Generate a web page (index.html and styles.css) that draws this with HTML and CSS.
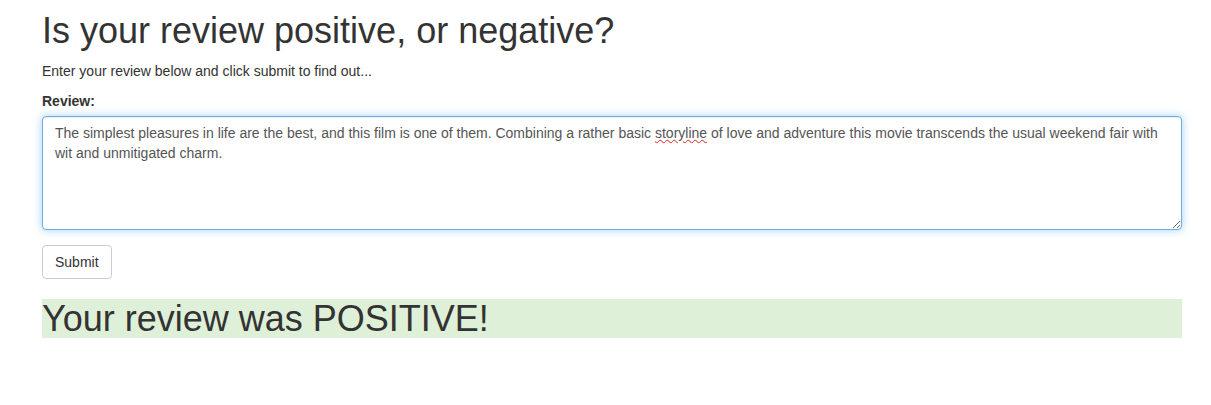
FILE: index.html
```html
<!DOCTYPE html>
<html lang="en">
<head>
<meta charset="utf-8">
<title>Review sentiment</title>
<link rel="stylesheet" href="styles.css">
</head>
<body>
<div class="container">
  <h1 class="title">Is your review positive, or negative?</h1>
  <p class="intro">Enter your review below and click submit to find out...</p>
  <form class="review-form">
    <div class="form-group">
      <label class="form-label">Review:</label>
      <div class="form-control review-box" role="textbox" aria-multiline="true">The simplest pleasures in life are the best, and this film is one of them. Combining a rather basic <span class="misspelled">storyline</span> of love and adventure this movie transcends the usual weekend fair with wit and unmitigated charm.</div>
    </div>
    <button type="button" class="btn">Submit</button>
  </form>
  <h1 class="result">Your review was POSITIVE!</h1>
</div>
</body>
</html>
```
FILE: styles.css
```css
* { box-sizing: border-box; }
html, body { margin: 0; padding: 0; }
body {
  font-family: "Liberation Sans", Arial, Helvetica, sans-serif;
  font-size: 14px;
  line-height: 1.42857143;
  color: #333;
  background: #fff;
}
.container {
  width: 1140px;
  margin-left: 42px;
}
.title {
  font-size: 36px;
  font-weight: 500;
  line-height: 1.1;
  margin: 11px 0 10px;
}
.intro { margin: 0 0 10px; }
.form-group { margin-bottom: 15px; }
.form-label {
  display: inline-block;
  font-weight: bold;
  margin-bottom: 5px;
}
.form-control {
  display: block;
  width: 100%;
  padding: 6px 12px;
  font-size: 14px;
  line-height: 20px;
  color: #555;
  background: #fff;
  border: 1px solid #66afe9;
  border-radius: 4px;
  box-shadow: inset 0 1px 1px rgba(0,0,0,.075), 0 0 8px rgba(102,175,233,.6);
}
.review-box {
  height: 114px;
  overflow: auto;
  resize: vertical;
}
.misspelled {
  text-decoration: underline wavy #e02020;
  text-decoration-thickness: 1px;
  text-underline-offset: 1px;
}
.btn {
  display: inline-block;
  font-family: inherit;
  font-size: 14px;
  line-height: 1.42857143;
  padding: 6px 12px;
  color: #333;
  background: #fff;
  border: 1px solid #ccc;
  border-radius: 4px;
  cursor: pointer;
}
.result {
  font-size: 36px;
  font-weight: 500;
  line-height: 1.1;
  margin: 20px 0 0;
  background: #dff0d8;
}
```
